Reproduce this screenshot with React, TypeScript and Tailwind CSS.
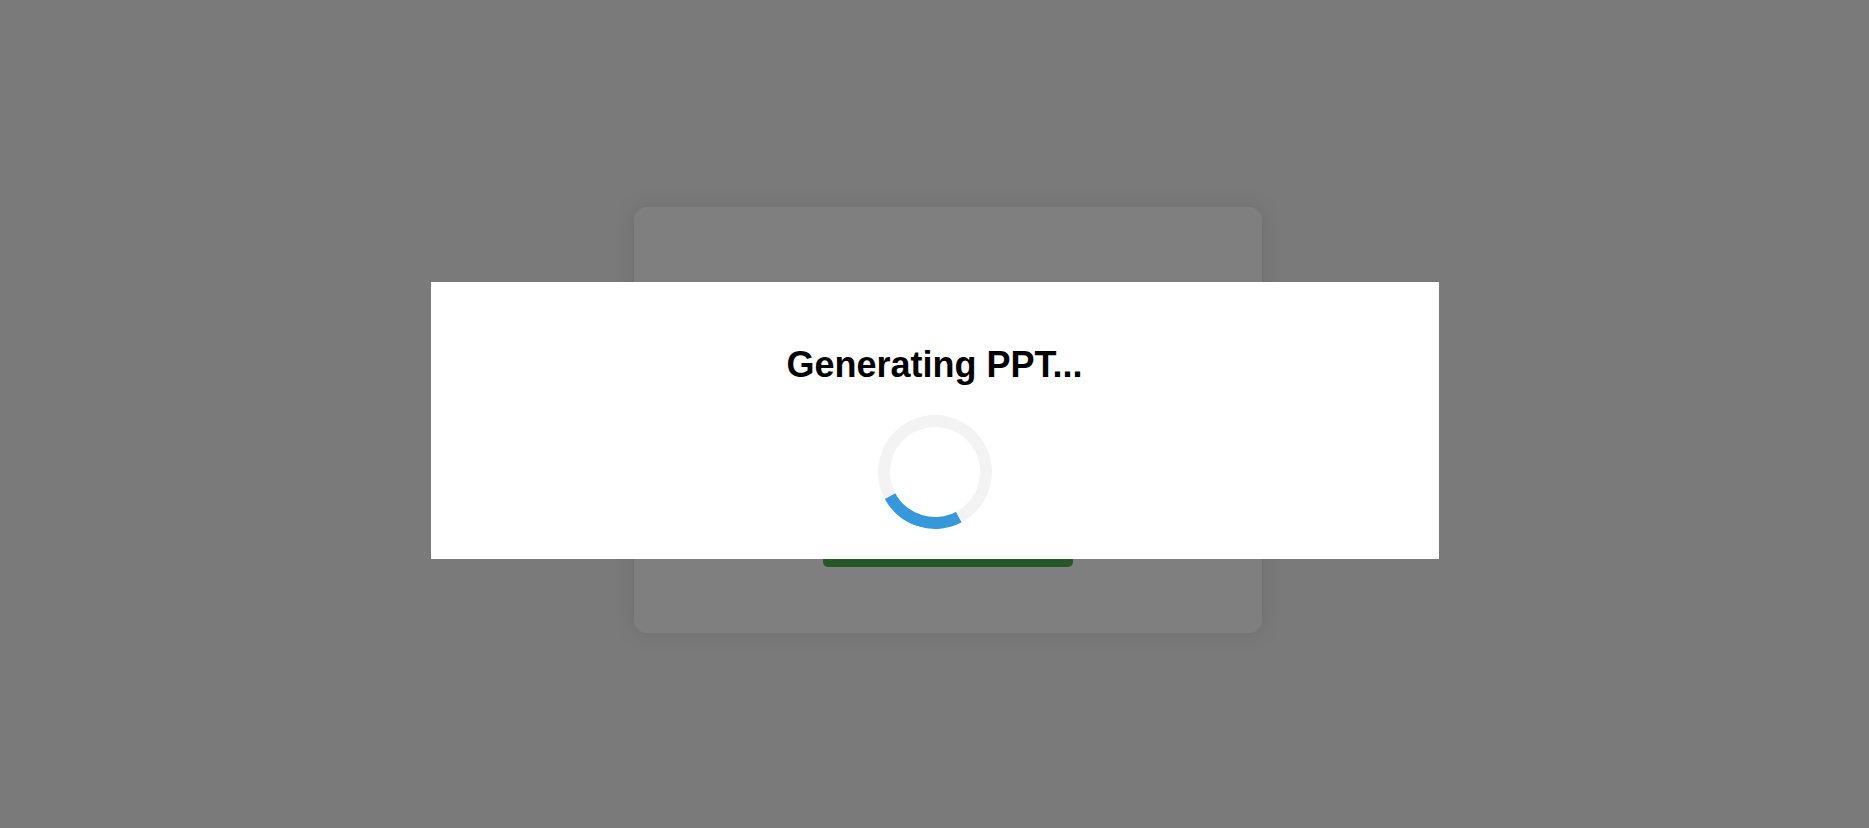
import type { JSX } from 'react';

export default function App(): JSX.Element {
	return (
		<main className="relative min-h-screen bg-[#f4f4f4] flex items-center justify-center pl-[27px] pt-[12px] font-['Liberation_Sans',Arial,sans-serif]">
			{/* page card behind the overlay, only its button peeks out */}
			<section className="w-[628px] h-[426px] bg-white rounded-[13px] shadow-[0_0_22px_rgba(0,0,0,0.1)] flex flex-col items-center justify-end pb-[66px]">
				<button className="w-[250px] h-[50px] bg-[#4caf50] text-white text-lg rounded-[5px]">Generate PPT</button>
			</section>

			{/* loading overlay */}
			<div className="fixed inset-0 bg-black/50 flex items-center justify-center pt-[13px]">
				<div className="w-[1008px] h-[277px] bg-white flex flex-col items-center pt-[65px] pb-[30px]">
					<h2 className="text-[36px] leading-none font-bold text-black">Generating PPT...</h2>
					<div className="mt-[32px] w-[114px] h-[114px] rounded-full border-[12px] border-[#f3f3f3] border-t-[#3498db] rotate-[197deg]" />
				</div>
			</div>
		</main>
	);
}
